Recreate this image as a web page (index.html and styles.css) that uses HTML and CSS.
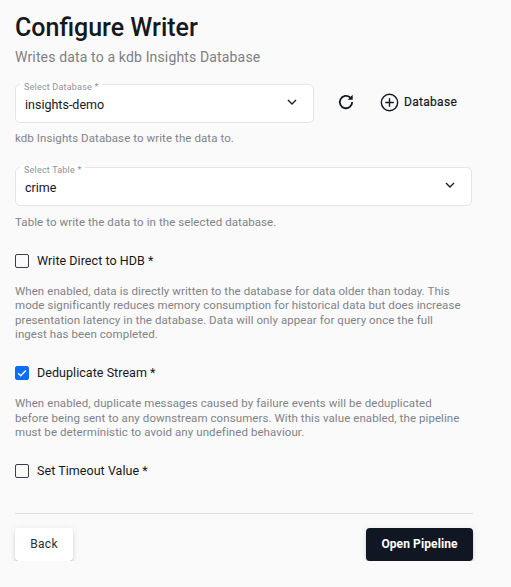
FILE: index.html
```html
<!DOCTYPE html>
<html lang="en">
<head>
<meta charset="UTF-8">
<meta name="viewport" content="width=device-width, initial-scale=1.0">
<title>Configure Writer</title>
<link rel="stylesheet" href="styles.css">
</head>
<body>

<div class="page">
    <h1 class="title">Configure Writer</h1>
    <p class="subtitle">Writes data to a kdb Insights Database</p>

    <div class="db-row">
        <div class="select select-db">
            <span class="select-label">Select Database *</span>
            <span class="select-value">insights-demo</span>
            <svg class="chevron" viewBox="0 0 10 6" width="10" height="6"><path d="M1 1l4 4 4-4" fill="none" stroke="#1a1f2b" stroke-width="1.4"/></svg>
        </div>
        <svg class="refresh" viewBox="0 0 24 24" width="20" height="20"><path d="M19.4 12a7.4 7.4 0 1 1-2.4-5.4" fill="none" stroke="#141821" stroke-width="2.2"/><path d="M20 3.4v6h-6z" fill="#141821"/></svg>
        <div class="add-db">
            <svg viewBox="0 0 20 20" width="19" height="19"><circle cx="10" cy="10" r="8.6" fill="none" stroke="#141821" stroke-width="1.5"/><path d="M10 5.5v9M5.5 10h9" stroke="#141821" stroke-width="1.5"/></svg>
            <span>Database</span>
        </div>
    </div>
    <p class="hint hint-db">kdb Insights Database to write the data to.</p>

    <div class="select select-table">
        <span class="select-label">Select Table *</span>
        <span class="select-value">crime</span>
        <svg class="chevron" viewBox="0 0 10 6" width="10" height="6"><path d="M1 1l4 4 4-4" fill="none" stroke="#1a1f2b" stroke-width="1.4"/></svg>
    </div>
    <p class="hint hint-table">Table to write the data to in the selected database.</p>

    <label class="check check-hdb"><span class="box"></span>Write Direct to HDB *</label>
    <p class="hint para">When enabled, data is directly written to the database for data older than today. This mode significantly reduces memory consumption for historical data but does increase presentation latency in the database. Data will only appear for query once the full ingest has been completed.</p>

    <label class="check check-dedup">
        <span class="box checked"><svg viewBox="0 0 14 14" width="14" height="14"><path d="M2.5 7.2l3 3 6-6.2" fill="none" stroke="#fff" stroke-width="1.5"/></svg></span>
        Deduplicate Stream *
    </label>
    <p class="hint para">When enabled, duplicate messages caused by failure events will be deduplicated before being sent to any downstream consumers. With this value enabled, the pipeline must be deterministic to avoid any undefined behaviour.</p>

    <label class="check check-timeout"><span class="box"></span>Set Timeout Value *</label>

    <div class="footer">
        <button class="btn btn-back">Back</button>
        <button class="btn btn-open">Open Pipeline</button>
    </div>
</div>

</body>
</html>
```

FILE: styles.css
```css
body {
    margin: 0;
    background-color: #fafafa;
    font-family: Roboto, "Liberation Sans", sans-serif;
    color: #141821;
}
p {
    margin: 0;
}
.page {
    width: 458px;
    padding: 13px 0 0 15px;
}
.title {
    margin: 0;
    font-size: 25px;
    line-height: 30px;
    font-weight: 500;
}
.subtitle {
    margin-top: 5px;
    font-size: 14px;
    line-height: 18px;
    color: #7d7f84;
    letter-spacing: 0.15px;
}
.db-row {
    display: flex;
    align-items: center;
    margin-top: 18px;
}
.select {
    position: relative;
    box-sizing: border-box;
    height: 39px;
    padding: 11px 9px 0;
    background-color: #fff;
    border: 1px solid #e4e5e7;
    border-radius: 5px;
    font-size: 12.5px;
    line-height: 18px;
}
.select-db {
    width: 299px;
}
.select-table {
    width: 457px;
    margin-top: 22px;
}
.select-label {
    position: absolute;
    top: -3px;
    left: 4px;
    padding: 0 4px;
    background-color: #fff;
    font-size: 9px;
    line-height: 11px;
    color: #8f9196;
    letter-spacing: 0.2px;
}
.select-value {
    display: block;
}
.chevron {
    position: absolute;
    top: 14px;
    right: 16px;
}
.refresh {
    margin: -3px 0 0 22px;
}
.add-db {
    display: flex;
    align-items: center;
    gap: 5px;
    margin: -3px 0 0 24px;
    font-size: 12px;
    letter-spacing: 0.3px;
    -webkit-text-stroke: 0.2px #141821;
}
.hint {
    font-size: 11.5px;
    line-height: 14.4px;
    color: #7f8389;
    letter-spacing: 0.08px;
}
.hint-db {
    margin-top: 8px;
}
.hint-table {
    margin-top: 9px;
}
.para {
    width: 450px;
    margin-top: 15px;
}
.check {
    display: flex;
    align-items: center;
    gap: 8px;
    font-size: 12.5px;
    line-height: 16px;
    letter-spacing: 0.05px;
}
.check-hdb {
    margin-top: 23px;
}
.check-dedup {
    margin-top: 24px;
}
.check-timeout {
    margin-top: 23px;
}
.box {
    box-sizing: border-box;
    display: flex;
    align-items: center;
    justify-content: center;
    width: 14px;
    height: 14px;
    border: 1px solid #3b3f47;
    border-radius: 2px;
}
.box.checked {
    background-color: #0d6efd;
    border-color: #0d6efd;
}
.footer {
    display: flex;
    justify-content: space-between;
    width: 458px;
    margin-top: 34px;
    padding-top: 14px;
    border-top: 1px solid #dedfe1;
}
.btn {
    height: 33px;
    border: none;
    border-radius: 4px;
    font-family: inherit;
    font-size: 12px;
    box-shadow: 0 2px 3px -1px rgba(0, 0, 0, 0.4), 0 1px 8px rgba(0, 0, 0, 0.08);
}
.btn-back {
    width: 58px;
    background-color: #fff;
    color: #2a2d33;
    letter-spacing: 0.3px;
}
.btn-open {
    width: 107px;
    background-color: #111722;
    color: #fff;
    font-weight: 700;
    letter-spacing: 0.1px;
}
```
